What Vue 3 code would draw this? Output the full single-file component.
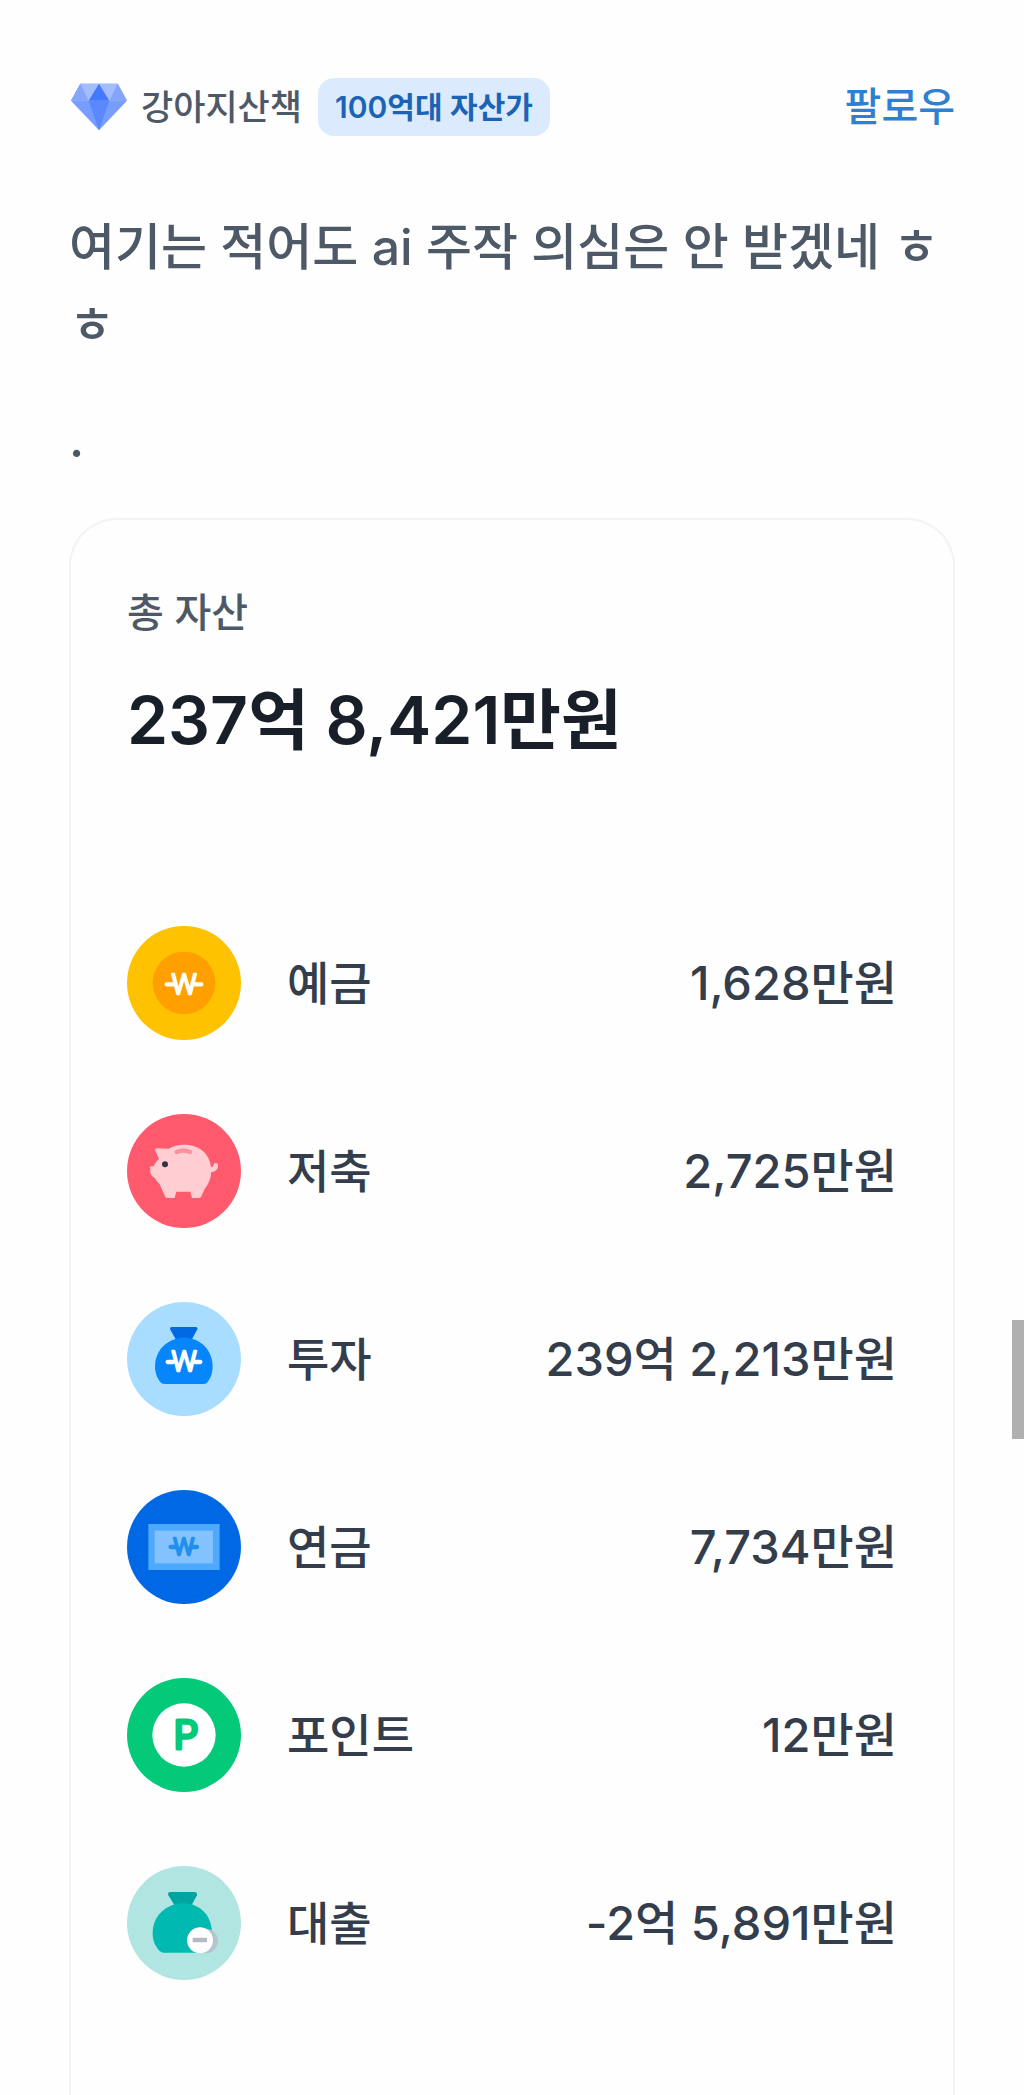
<template>
  <main class="post">

    <!-- Author -->
    <header class="author">
      <svg class="gem" viewBox="0 0 168 140" aria-hidden="true">
        <path d="M28 0H140L168 51L84 140L0 51Z" fill="#779dff" />
        <path d="M28 0H140L168 51H0Z" fill="#a3bdff" />
        <path d="M28 0L0 51H53ZM140 0L168 51H115Z" fill="#84a5fb" />
        <path d="M84 0L115 51H53Z" fill="#4378ff" />
        <path d="M53 51H115L84 140Z" fill="#5b88fc" />
      </svg>
      <span class="name">강아지산책</span>
      <span class="badge">100억대 자산가</span>
      <button class="follow" type="button">팔로우</button>
    </header>

    <!-- Body -->
    <p class="text">여기는 적어도 ai 주작 의심은 안 받겠네 ㅎㅎ</p>
    <p class="text dot">.</p>

    <!-- Assets -->
    <section class="card">
      <h2 class="card-title">총 자산</h2>
      <p class="total">237억 8,421만원</p>

      <ul class="assets">
        <li v-for="a in assets" :key="a.kind" class="asset">
          <svg class="icon" viewBox="0 0 342 342" aria-hidden="true">
            <circle class="disc" :class="a.kind" cx="171" cy="171" r="171" />

            <g v-if="a.kind === 'deposit'">
              <circle cx="171" cy="171" r="94" fill="#ff9f00" />
              <g class="won white">
                <text x="171" y="204">W</text>
                <path d="M119 175H138M204 175H223" />
              </g>
            </g>

            <g v-else-if="a.kind === 'saving'">
              <path
                d="M84 108Q84 103 90 103L125 104Q145 92 173 92C218 92 248 120 252 159Q261 159 260 150Q264 144 272 149C277 164 265 174 253 174Q252 201 232 227L222 249Q220 252 215 252H195L190 233H148L143 252H120Q116 252 114 247L98 211Q88 201 84 193Q73 187 70 176C69 169 72 165 68 160Q69 156 80 157Q87 142 96 134Z"
                fill="#ffcdd2"
              />
              <path d="M149 114Q169 106 189 114" fill="none" stroke="#f8929f" stroke-width="13" stroke-linecap="round" />
              <circle cx="114" cy="151" r="9" fill="#33323f" />
            </g>

            <g v-else-if="a.kind === 'invest'">
              <path d="M134 75H206Q213 76 211 82L194 113H147L130 83Q127 76 134 75Z" fill="#0069e2" />
              <path d="M148 110Q171 103 195 110C231 120 257 151 257 193C257 217 248 234 240 242Q236 246 229 246H114Q106 246 102 242C94 234 84 217 84 193C84 151 111 120 148 110Z" fill="#0785fb" />
              <g class="won white">
                <text x="171" y="208">W</text>
                <path d="M122 180H138M204 180H220" />
              </g>
            </g>

            <g v-else-if="a.kind === 'pension'">
              <rect x="64" y="102" width="214" height="138" fill="#4da8ff" />
              <rect x="83" y="122" width="175" height="98" fill="#83c2ff" />
              <g class="won blue">
                <text x="170" y="196">W</text>
                <path d="M131 171H145M195 171H210" />
              </g>
            </g>

            <g v-else-if="a.kind === 'point'">
              <circle cx="171" cy="171" r="95" fill="#fff" />
              <text class="p-mark" x="177" y="214">P</text>
            </g>

            <g v-else>
              <path d="M130 78H202Q212 79 210 88L194 117H142L124 88Q121 79 130 78Z" fill="#00a5a1" />
              <path d="M142 115Q168 108 195 115C232 128 255 158 255 202C255 224 249 245 235 260H110Q103 260 98 255C85 242 77 224 77 202C77 158 104 128 142 115Z" fill="#00b9b1" />
              <circle cx="236" cy="225" r="37" fill="#b4c6cb" />
              <circle cx="219" cy="223" r="39" fill="#fff" />
              <rect x="197" y="215" width="43" height="14" rx="2" fill="#b3bac3" />
            </g>
          </svg>
          <span class="label">{{ a.label }}</span>
          <span class="amount">{{ a.amount }}</span>
        </li>
      </ul>
    </section>

    <div class="scroll-thumb"></div>
  </main>
</template>

<script setup>
const assets = [
  { kind: "deposit", label: "예금", amount: "1,628만원" },
  { kind: "saving", label: "저축", amount: "2,725만원" },
  { kind: "invest", label: "투자", amount: "239억 2,213만원" },
  { kind: "pension", label: "연금", amount: "7,734만원" },
  { kind: "point", label: "포인트", amount: "12만원" },
  { kind: "loan", label: "대출", amount: "-2억 5,891만원" }
]
</script>

<style>
body {
  margin: 0;
  background: #fefefe;
}
</style>

<style scoped>
.post {
  box-sizing: border-box;
  min-height: 100vh;
  padding: 76px 69px 0;
  display: flex;
  flex-direction: column;
  font-family: Inter, "Noto Sans CJK KR", sans-serif;
  font-weight: 500;
  color: #4e5968;
}

p, h2, ul {
  margin: 0;
  padding: 0;
}

/* Author */
.author {
  display: flex;
  align-items: center;
  height: 62px;
  line-height: 58px;
}

.gem {
  width: 56px;
  height: 48px;
  margin: 0 14px 0 2px;
}

.name {
  font-size: 35px;
}

.badge {
  margin-left: 16px;
  padding: 0 17px;
  border-radius: 16px;
  background: #dceafd;
  color: #1b64b5;
  font-size: 30px;
  font-weight: 600;
}

.follow {
  margin-left: auto;
  padding: 0;
  border: 0;
  background: none;
  color: #2e80d0;
  font: inherit;
  font-size: 40px;
}

/* Body */
.text {
  margin-top: 70px;
  font-size: 50px;
  line-height: 78px;
  word-break: break-all;
}

.text.dot {
  margin-top: 36px;
}

/* Card */
.card {
  flex: 1;
  margin-top: 40px;
  padding: 61px 56px 56px;
  border: 2px solid #f2f3f5;
  border-bottom: 0;
  border-radius: 48px 48px 0 0;
}

.card-title {
  font-size: 40px;
  font-weight: 500;
  line-height: 64px;
}

.total {
  margin-top: 27px;
  color: #191f28;
  font-size: 66px;
  font-weight: 600;
  line-height: 96px;
}

.assets {
  margin-top: 158px;
  display: flex;
  flex-direction: column;
  gap: 74px;
  list-style: none;
}

.asset {
  display: flex;
  align-items: center;
  color: #333d4b;
  font-size: 46px;
  line-height: 60px;
}

.icon {
  width: 114px;
  height: 114px;
  margin-right: 46px;
}

.amount {
  margin-left: auto;
  font-size: 47px;
}

/* Icons */
.deposit { fill: #ffc200 }
.saving { fill: #ff596d }
.invest { fill: #a8ddff }
.pension { fill: #0068e5 }
.point { fill: #04c978 }
.loan { fill: #b0e5e2 }

.won {
  font-family: Roboto, sans-serif;
  font-size: 84px;
  font-weight: 300;
  text-anchor: middle;
  stroke-width: 7;
  stroke-linecap: round;
  stroke-linejoin: round;
}

.won path {
  stroke-width: 13;
}

.won.white {
  fill: #fff;
  stroke: #fff;
}

.won.blue {
  fill: #218fec;
  stroke: #218fec;
  font-size: 70px;
}

.p-mark {
  fill: #04c978;
  stroke: #04c978;
  stroke-width: 9;
  stroke-linejoin: round;
  font-size: 118px;
  font-weight: 400;
  text-anchor: middle;
}

.scroll-thumb {
  position: fixed;
  top: 63%;
  right: 0;
  width: 12px;
  height: 119px;
  background: #b0b0b0;
}
</style>
